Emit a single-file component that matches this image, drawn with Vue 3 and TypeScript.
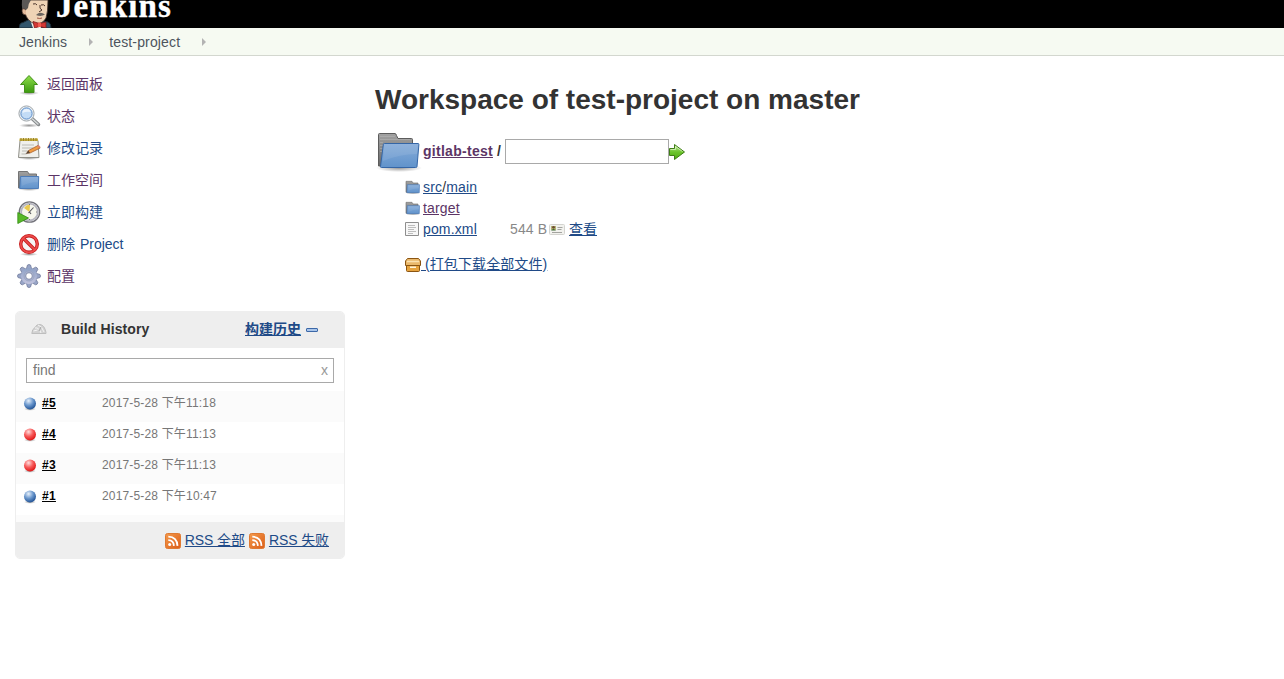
<script setup lang="ts">
interface Task { icon: string; label: string; visited: boolean }
interface Build { id: number; ok: boolean; date: string }

const tasks: Task[] = [
  { icon: 'up', label: '返回面板', visited: true },
  { icon: 'search', label: '状态', visited: true },
  { icon: 'notepad', label: '修改记录', visited: false },
  { icon: 'dir', label: '工作空间', visited: true },
  { icon: 'clock', label: '立即构建', visited: false },
  { icon: 'stop', label: '删除 Project', visited: false },
  { icon: 'gear', label: '配置', visited: true },
]

const builds: Build[] = [
  { id: 5, ok: true, date: '2017-5-28 下午11:18' },
  { id: 4, ok: false, date: '2017-5-28 下午11:13' },
  { id: 3, ok: false, date: '2017-5-28 下午11:13' },
  { id: 1, ok: true, date: '2017-5-28 下午10:47' },
]

const teeth = [0, 45, 90, 135, 180, 225, 270, 315]
</script>

<template>
  <svg class="defs" width="0" height="0" aria-hidden="true">
    <defs>
      <linearGradient id="gGreen" x1="0" y1="0" x2="0" y2="1"><stop offset="0" stop-color="#8fe04a" /><stop offset="1" stop-color="#3c9a10" /></linearGradient>
      <linearGradient id="gArrow" x1="0" y1="0" x2="0" y2="1"><stop offset="0" stop-color="#c5e8a4" /><stop offset=".5" stop-color="#6cc52c" /><stop offset="1" stop-color="#4faa12" /></linearGradient>
      <linearGradient id="gBlue" x1="0" y1="0" x2="0" y2="1"><stop offset="0" stop-color="#86acd9" /><stop offset="1" stop-color="#6193cb" /></linearGradient>
      <linearGradient id="gGray" x1="0" y1="0" x2="0" y2="1"><stop offset="0" stop-color="#a2a2a2" /><stop offset="1" stop-color="#696969" /></linearGradient>
      <linearGradient id="gGear" x1="0" y1="0" x2="0" y2="1"><stop offset="0" stop-color="#8da1c6" /><stop offset="1" stop-color="#c3c4de" /></linearGradient>
      <linearGradient id="gRss" x1="0" y1="0" x2="1" y2="1"><stop offset="0" stop-color="#f49a4b" /><stop offset="1" stop-color="#db5d18" /></linearGradient>
      <radialGradient id="bBlue" cx=".38" cy=".28" r=".75"><stop offset="0" stop-color="#e8f1fb" /><stop offset=".5" stop-color="#6c98cd" /><stop offset="1" stop-color="#1d4f93" /></radialGradient>
      <radialGradient id="bRed" cx=".38" cy=".28" r=".75"><stop offset="0" stop-color="#ffdede" /><stop offset=".5" stop-color="#f75b5b" /><stop offset="1" stop-color="#dd1212" /></radialGradient>
      <radialGradient id="gShade"><stop offset="0" stop-color="#000" stop-opacity=".4" /><stop offset="1" stop-color="#000" stop-opacity="0" /></radialGradient>
    </defs>
    <symbol id="i-folder" viewBox="0 0 48 48">
      <ellipse cx="24" cy="41" rx="23" ry="4" fill="url(#gShade)" />
      <path d="M3.500 39V7.500q0-1 1-1h15.500q1 0 1.500 2l1.500 3h13.500q1 0 1 1V39z" fill="url(#gGray)" stroke="#5c5c5c" />
      <path d="M5 9.500h15M5 12.500h30M5 15.500h3M5 18.500h3M5 21.500h3M5 24.500h2" stroke="#b9b9b9" opacity=".5" />
      <path d="M9.500 16.500h33.500q1 0 .9 1L42 39.500q0 1-1.500 1H6.500q-1.200 0-1-1L8.300 17.500q0-1 1.200-1z" fill="url(#gBlue)" stroke="#3566a6" />
      <path d="M9 17h34l-1 10Q25 27 8 34z" fill="#fff" opacity=".09" />
    </symbol>
    <symbol id="i-dir" viewBox="0 0 24 24">
      <ellipse cx="12" cy="21" rx="11" ry="2" fill="url(#gShade)" />
      <path d="M1.500 20V3.500h9l1.500 2.500h7.500v14z" fill="url(#gGray)" stroke="#747474" />
      <path d="M3.500 8.500h18.200l-.3 12H2.800z" fill="url(#gBlue)" stroke="#4d7cb8" />
      <path d="M5 9h16v5q-9 0-16 4z" fill="#fff" opacity=".08" />
    </symbol>
    <symbol id="i-up" viewBox="0 0 24 24">
      <ellipse cx="12" cy="21" rx="10" ry="2.200" fill="url(#gShade)" />
      <path d="M12 3.500 20.500 12.500h-3.500v8H7.500v-8h-4z" fill="url(#gGreen)" stroke="#43901a" />
    </symbol>
    <symbol id="i-search" viewBox="0 0 24 24">
      <ellipse cx="12" cy="21.500" rx="10" ry="2" fill="url(#gShade)" />
      <path d="M15 14.500 21.500 20.500" stroke="#85898b" stroke-width="3.500" stroke-linecap="round" />
      <path d="M15 14.500 21 20" stroke="#d5d8d8" stroke-width="1.500" stroke-linecap="round" />
      <circle cx="9.500" cy="9.500" r="7.600" fill="#e9eef1" stroke="#a2a8ac" />
      <circle cx="9.500" cy="9.500" r="5.600" fill="#c3dcf6" stroke="#5f8fc9" />
      <path d="M5.500 9q0-4 4-4t4 3q-4-1-8 1z" fill="#fff" opacity=".65" />
    </symbol>
    <symbol id="i-notepad" viewBox="0 0 24 24">
      <ellipse cx="12" cy="22" rx="11" ry="2" fill="url(#gShade)" />
      <path d="M3 4.500h18l1 17H1.500z" fill="#f0f0ec" stroke="#8f8f88" />
      <path d="M2.500 2.500h18.500v2.500H2.500z" fill="#c5ac3d" />
      <path d="M4 2v3m2.500-3v3M9 2v3m2.500-3v3M14 2v3m2.500-3v3M19 2v3" stroke="#9c8424" />
      <path d="M5 9h12M5 12h11M5 15h7M4.500 18h5" stroke="#babab5" />
      <path d="m10 17 1.500-2.500 9.500-5 2.200 2.500-10.200 5z" fill="#f09b42" stroke="#a9612d" stroke-width=".8" />
      <path d="m8.500 18 3-3.500 1.500 2.500z" fill="#5b4636" /><path d="m20 10 1.800-1 1.700 2-1.700.8z" fill="#d98274" />
    </symbol>
    <symbol id="i-clock" viewBox="0 0 24 24">
      <circle cx="12.500" cy="12" r="10.200" fill="#f3f3ee" stroke="#73737b" stroke-width="1.300" />
      <circle cx="12.500" cy="12" r="8.400" fill="#f6f6ec" stroke="#b5b5c0" stroke-width="1.800" />
      <path d="m12.500 12-5.500-4q3-4 6-3z" fill="#eac94e" />
      <path d="m11.500 13 5-5.500M12.500 12l1.500 2" fill="none" stroke="#55555b" stroke-width="1.100" />
      <path d="M12.500 4v1M20 12h-1M12.500 20v-1" stroke="#777" />
      <path d="M.8 12.500 11.500 18 .8 23.500z" fill="#58b928" stroke="#318c12" stroke-width=".8" />
    </symbol>
    <symbol id="i-stop" viewBox="0 0 24 24">
      <ellipse cx="12" cy="22.300" rx="9" ry="1.700" fill="url(#gShade)" />
      <circle cx="12" cy="12" r="8.300" fill="#f5f5f5" stroke="#c71c1c" stroke-width="3.400" />
      <path d="m6 6 12 12" stroke="#c71c1c" stroke-width="3.400" />
      <circle cx="12" cy="12" r="8.300" fill="none" stroke="#ec4c4c" stroke-width="1.700" />
      <path d="m6 6 12 12" stroke="#ec4c4c" stroke-width="1.700" />
    </symbol>
    <symbol id="i-gear" viewBox="0 0 24 24">
      <g fill="#98a5c7" stroke="#727c9d" stroke-width=".8">
        <path v-for="a in teeth" :key="a" d="M9 6 10.500 1q1.500-1 3 0L15 6z" :transform="`rotate(${a} 12 12)`" />
      </g>
      <circle cx="12" cy="12" r="8" fill="url(#gGear)" />
      <circle cx="12" cy="12" r="5" fill="#a9b3d0" stroke="#929cbb" stroke-width=".6" />
      <circle cx="12" cy="12" r="3.300" fill="#fff" stroke="#727c9d" stroke-width=".8" />
    </symbol>
    <symbol id="i-go" viewBox="0 0 16 16">
      <path d="M.5 4.500h5V.5L15.500 8l-10 7.500v-4h-5z" fill="url(#gArrow)" stroke="#3f7d16" />
      <path d="M1.500 5.500h5V2.500l7 5" fill="none" stroke="#e2f6ce" opacity=".7" />
    </symbol>
    <symbol id="i-file" viewBox="0 0 16 16">
      <path d="M.5 1.500h13v13H.5z" fill="#f7f7f7" stroke="#8e8e8e" />
      <path d="M3 4.500h7M3 6.500h8M3 8.500h6M3 10.500h8M3 12.500h5" stroke="#bdbdbd" />
    </symbol>
    <symbol id="i-card" viewBox="0 0 16 16">
      <rect x=".5" y="3.500" width="15" height="10" rx="1" fill="#f2f2ee" stroke="#d4d4d0" />
      <path d="M2 5h5v4H2z" fill="#b5b577" /><circle cx="4.500" cy="6.300" r="1.400" fill="#704d32" /><path d="M2 9.500q2.500-3 5 0z" fill="#35632c" />
      <path d="M8.500 6.500h5M8.500 8.500h4M3 11.500h10" stroke="#a4a4a0" />
    </symbol>
    <symbol id="i-box" viewBox="0 0 16 16">
      <path d="M2.500 1.500h11l2 2.500v4.500H.5V4z" fill="#eab86b" stroke="#8b5512" />
      <path d="M1.500 8.500h13v5q0 1-1 1h-11q-1 0-1-1z" fill="#e6a33e" stroke="#8b5512" />
      <path d="M2 4.500h12" stroke="#fae2b2" stroke-width="1.500" /><path d="M5 9.500h6v1.500H5z" fill="#fff5dc" />
    </symbol>
    <symbol id="i-rss" viewBox="0 0 16 16">
      <rect x=".5" y=".5" width="15" height="15" rx="2" fill="url(#gRss)" stroke="#df7a32" />
      <circle cx="4.700" cy="11.500" r="1.500" fill="#fff" />
      <path d="M3.300 7.200q5.300 0 5.600 5.700M3.300 3.700q8.800.3 9.200 9.200" fill="none" stroke="#fff" stroke-width="1.800" />
    </symbol>
    <symbol id="i-weather" viewBox="0 0 16 16">
      <path d="M.8 11.500Q1 7 4 5.500 5.500 2 9 2.500q4.500.5 6 8v1z" fill="#d2d2d2" stroke="#bebebe" />
      <path d="M4 6q4-1 6 5M7 3q4 1 6 7M2.500 9l4-1" fill="none" stroke="#f5f5f5" /><path d="m8 9 2-4" stroke="#a7a7a7" />
    </symbol>
  </svg>

  <header class="top">
    <svg class="butler" width="34" height="28" viewBox="0 0 34 28">
      <path d="M0 28q0-5 4-5.500l7-3.500 12 2 6 1q3 1 3 6z" fill="#31556b" stroke="#1b2b35" />
      <path d="m10 17 13 2-1 9H14z" fill="#f5f1eb" />
      <path d="M4 0v9q1 2 2 4 2 8 10 11 8 0 11-6 2-6 2-18z" fill="#efd3b5" stroke="#3b2b26" stroke-width=".8" />
      <path d="M3 0h9q-3 4-3 8l-2 2q0 4-1 5Q2 11 3 0z" fill="#5b5856" />
      <path d="M7 10q-4-3-4 1t4 4" fill="#e2b99a" stroke="#4b342b" stroke-width=".7" />
      <path d="M14 4q3-1 4 1m4 0q3-1 4 1M21 5q-1 4 2 5l-3 2" fill="none" stroke="#4c352c" />
      <path d="M17 15q4-4 9-.5-4 2.500-9 .5z" fill="#6d6660" /><path d="M18 18q3 1 5 0" stroke="#9e5344" fill="none" />
      <path d="m14 21.500 6.500 2 6.500-1.500v6l-6.500-1.500-5 1.500z" fill="#d43835" stroke="#7d1d1c" stroke-width=".8" /><rect x="19" y="22.500" width="3" height="4.500" fill="#f05a50" />
    </svg>
    <span class="brand">Jenkins</span>
  </header>
  <nav class="crumbs">
    <a>Jenkins</a><i class="sep"></i><a>test-project</a><i class="sep"></i>
  </nav>

  <div class="page">
    <aside class="side">
      <ul class="tasks">
        <li v-for="t in tasks" :key="t.label">
          <svg width="24" height="24"><use :href="`#i-${t.icon}`" /></svg>
          <a :class="{ visited: t.visited }">{{ t.label }}</a>
        </li>
      </ul>

      <section class="history">
        <div class="head">
          <svg width="16" height="16"><use href="#i-weather" /></svg>
          <span class="title">Build History</span>
          <a class="trend">构建历史</a><i class="collapse"></i>
        </div>
        <div class="find"><span>find</span><span class="clear">x</span></div>
        <div v-for="b in builds" :key="b.id" class="build">
          <svg width="14" height="15" viewBox="0 0 14 15">
            <ellipse cx="7" cy="13" rx="6" ry="1.800" fill="url(#gShade)" />
            <circle cx="7" cy="7.500" r="6" :fill="b.ok ? 'url(#bBlue)' : 'url(#bRed)'" />
          </svg>
          <a>#{{ b.id }}</a>
          <span class="date">{{ b.date }}</span>
        </div>
        <div class="tail"></div>
        <div class="rss">
          <svg width="16" height="16"><use href="#i-rss" /></svg><a>RSS 全部</a>
          <svg width="16" height="16"><use href="#i-rss" /></svg><a>RSS 失败</a>
        </div>
      </section>
    </aside>

    <main class="main">
      <h1>Workspace of test-project on master</h1>
      <div class="path">
        <svg width="48" height="48"><use href="#i-folder" /></svg>
        <a class="visited">gitlab-test</a><span class="slash">/</span>
        <input type="text" />
        <svg class="go" width="16" height="16"><use href="#i-go" /></svg>
      </div>
      <div class="files">
        <div class="file"><svg width="16" height="16"><use href="#i-dir" /></svg><span><a>src</a>/<a>main</a></span></div>
        <div class="file"><svg width="16" height="16"><use href="#i-dir" /></svg><span><a class="visited">target</a></span></div>
        <div class="file">
          <svg width="16" height="16"><use href="#i-file" /></svg><span class="name"><a>pom.xml</a></span>
          <span class="size">544 B</span>
          <svg class="card" width="16" height="16"><use href="#i-card" /></svg><a>查看</a>
        </div>
        <div class="file zip"><svg width="16" height="16"><use href="#i-box" /></svg><a>&nbsp;(打包下载全部文件)</a></div>
      </div>
    </main>
  </div>
</template>

<style>
body { margin: 0; background: #fff; color: #333; font: 14px/20px "Liberation Sans", "Noto Sans CJK SC", sans-serif; }
#app { height: 679px; overflow: hidden; }
</style>

<style scoped>
.defs { position: absolute; }
svg { display: block; flex: none; }
a { color: #204a87; }
a.visited { color: #5c3566; }
.top { height: 28px; background: #000; display: flex; overflow: hidden; padding-left: 19px; }
.brand { margin-left: 3px; height: 28px; color: #fff; font: bold 33px/13px "Liberation Serif", serif; letter-spacing: 1.1px; -webkit-text-stroke: .4px #fff; }
.crumbs { height: 27px; background: #f6faf2; border-bottom: 1px solid #d3d7cf; display: flex; align-items: center; padding-left: 19px; }
.crumbs a { color: #4d545d; line-height: 27px; padding-top: 1px; letter-spacing: .15px; }
.crumbs a:first-child { letter-spacing: .1px; }
.sep { width: 0; border: solid transparent; border-width: 4px 0 4px 4px; border-left-color: #b3b3b3; margin: 1px 16px 0 22px; }
.page { display: flex; }
.side { width: 330px; padding: 12px 0 0 15px; }
.tasks { list-style: none; margin: 0; padding: 0; }
.tasks li { height: 32px; display: flex; align-items: center; padding-left: 2px; }
.tasks a { margin-left: 6px; word-spacing: 1px; }
.history { width: 330px; box-sizing: border-box; height: 248px; margin-top: 19px; border: 1px solid #eee; border-radius: 5px; overflow: hidden; }
.head { height: 36px; background: #eee; display: flex; align-items: center; padding-left: 15px; font-weight: bold; }
.title { margin-left: 14px; width: 184px; padding-bottom: 2px; letter-spacing: .1px; }
.trend { padding-bottom: 2px; }
.trend, .rss a, .build a, .file a, .path a { text-decoration: underline; }
.collapse { width: 10px; height: 2px; border: 1px solid #3c68a8; background: #a9c5ea; margin: 0 0 1px 5px; border-radius: 1px; }
.find { margin: 10px 10px 8px; height: 23px; border: 1px solid #a9a9a9; display: flex; align-items: center; justify-content: space-between; padding: 0 5px 0 6px; color: #777; }
.find span { padding-bottom: 2px; }
.find .clear { color: #999; }
.build { height: 31px; display: flex; padding-left: 7px; font-size: 12px; line-height: 24px; }
.build:nth-of-type(odd) { background: #fbfbfb; }
.build svg { margin-top: 5px; }
.build a { color: #000; font-weight: bold; margin-left: 5px; letter-spacing: .3px; }
.build .date { color: #777; margin-left: 46px; letter-spacing: .17px; }
.tail { height: 7px; background: #fbfbfb; }
.rss { height: 36px; background: #eee; display: flex; align-items: center; justify-content: flex-end; gap: 4px; padding-right: 15px; }
.rss a { letter-spacing: -.1px; }
.rss svg { margin-top: 1px; }
.main { padding: 28px 0 0 30px; }
h1 { margin: 0; font-size: 28px; line-height: 32px; color: #333; }
.path { display: flex; align-items: center; height: 48px; margin-top: 11px; font-weight: bold; }
.path a { letter-spacing: .28px; }
.path .go { margin-top: 2px; }
.slash { margin: 0 4px; }
input { width: 164px; height: 25px; box-sizing: border-box; border: 1px solid #a9a9a9; padding: 0; margin: 0; }
.files { padding: 1px 0 0 30px; }
.file { height: 21px; display: flex; align-items: center; }
.file svg { margin-right: 2px; }
.file span { letter-spacing: .15px; }
.name { width: 87px; }
.file .size { color: #888; width: 39px; }
.file .card { margin-right: 4px; }
.zip { margin-top: 14px; letter-spacing: .1px; }
.zip svg { margin: 2px 0 0; }
</style>
